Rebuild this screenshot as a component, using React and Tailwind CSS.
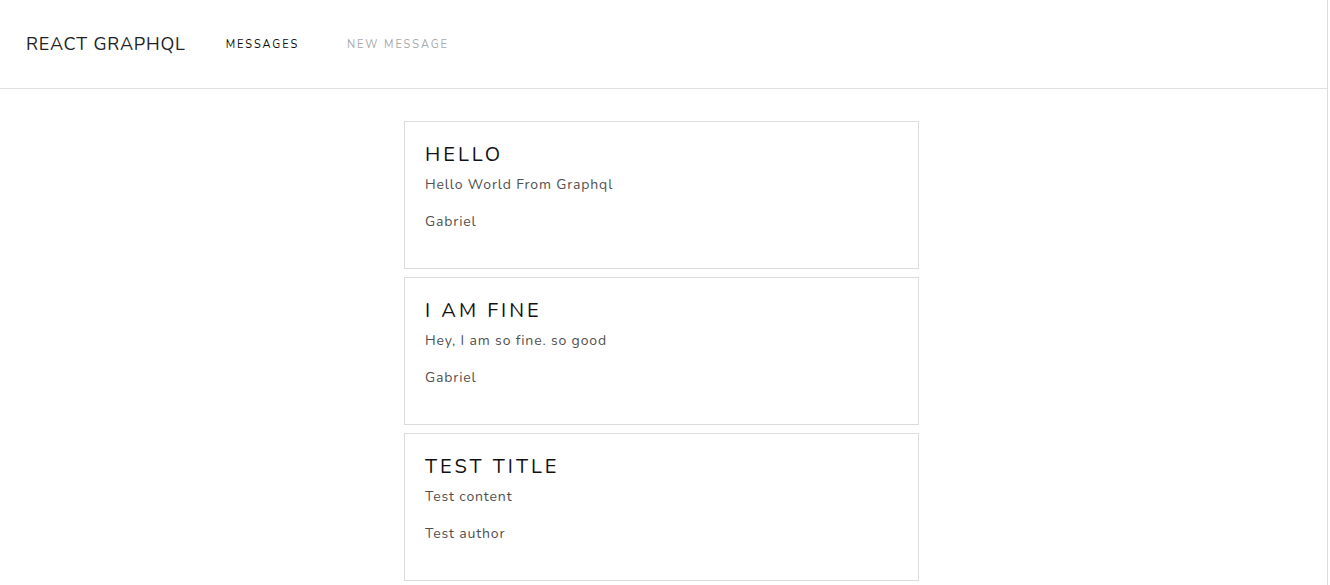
import React from "react";

const messages = [
  { title: "HELLO", content: "Hello World From Graphql", author: "Gabriel" },
  { title: "I AM FINE", content: "Hey, I am so fine. so good", author: "Gabriel" },
  { title: "TEST TITLE", content: "Test content", author: "Test author" },
];

export default function App() {
  return (
    <div
      className="w-[1328px] min-h-[585px] bg-white border-r border-[#dcdcdc]"
      style={{ fontFamily: "Nunito, Lato, 'Open Sans', sans-serif" }}
    >
      <header className="h-[89px] border-b border-[#e0e0e0] flex items-center pl-[26px]">
        <div className="text-[18px] tracking-[0.8px] text-[#222] mr-[40px]">REACT GRAPHQL</div>
        <nav className="flex items-center gap-[48px] text-[11px] tracking-[1.9px] pt-[2px]">
          <span className="text-[#111]">MESSAGES</span>
          <span className="text-[#aaa]">NEW MESSAGE</span>
        </nav>
      </header>
      <main className="pl-[404px] pt-[32px] flex flex-col gap-[8px]">
        {messages.map((m) => (
          <div
            key={m.title}
            className="w-[515px] h-[148px] border border-[#dcdcdc] px-[20px] pt-[19px]"
          >
            <h2 className="text-[20px] leading-[28px] tracking-[3px] text-[#111]">{m.title}</h2>
            <p className="text-[14px] leading-[20px] tracking-[0.85px] text-[#505050] mt-[6px]">{m.content}</p>
            <p className="text-[14px] leading-[20px] tracking-[0.85px] text-[#505050] mt-[17px]">{m.author}</p>
          </div>
        ))}
      </main>
    </div>
  );
}
